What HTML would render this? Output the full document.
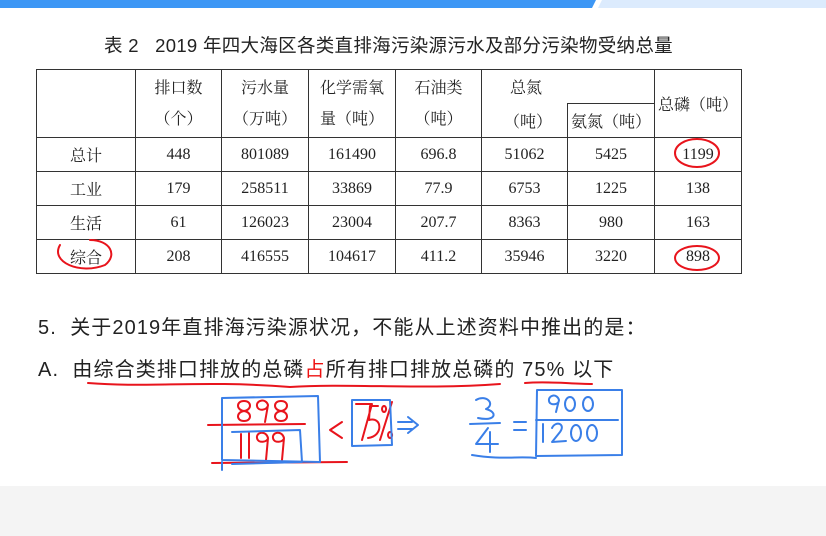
<!DOCTYPE html>
<html><head><meta charset="utf-8"><style>
*{margin:0;padding:0;box-sizing:border-box}
body{width:826px;height:536px;background:#fff;position:relative;overflow:hidden;font-family:"Liberation Serif","Noto Serif CJK SC",serif;color:#222}
.a{position:absolute;white-space:nowrap}
table{position:absolute;left:36px;top:69px;border-collapse:collapse;font-size:16px}
td{border:1.5px solid #333;text-align:center;height:34px;padding:0}
.s{font-family:"Liberation Sans","Noto Sans CJK SC",sans-serif}
</style></head><body>
<svg class="a" style="left:0;top:0" width="826" height="10">
<polygon points="0,0 596,0 592,8 0,8" fill="#3d97f5"/>
<polygon points="602,0 826,0 826,8 598,8" fill="#dcebfd"/>
</svg>
<div class="a" style="left:104px;top:32px;font-size:18.5px;letter-spacing:0.3px;font-family:'Liberation Sans','Noto Sans CJK SC',sans-serif;color:#222">表 2&nbsp;&nbsp; 2019 年四大海区各类直排海污染源污水及部分污染物受纳总量</div>
<table>
<colgroup><col style="width:99px"><col style="width:86px"><col style="width:87px"><col style="width:87px"><col style="width:86px"><col style="width:86px"><col style="width:87px"><col style="width:87px"></colgroup>
<tr style="height:34px"><td rowspan="2"></td><td rowspan="2" style="line-height:31px">排口数<br>（个）</td><td rowspan="2" style="line-height:31px">污水量<br>（万吨）</td><td rowspan="2" style="line-height:31px">化学需氧<br>量（吨）</td><td rowspan="2" style="line-height:31px">石油类<br>（吨）</td><td colspan="2" style="border-bottom:none;text-align:left;padding-left:28px">总氮</td><td rowspan="2">总磷（吨）</td></tr>
<tr style="height:34px"><td style="border-top:none;border-bottom:none;text-align:left;padding-left:22px">（吨）</td><td>氨氮（吨）</td></tr>
<tr><td>总计</td><td>448</td><td>801089</td><td>161490</td><td>696.8</td><td>51062</td><td>5425</td><td>1199</td></tr>
<tr><td>工业</td><td>179</td><td>258511</td><td>33869</td><td>77.9</td><td>6753</td><td>1225</td><td>138</td></tr>
<tr><td>生活</td><td>61</td><td>126023</td><td>23004</td><td>207.7</td><td>8363</td><td>980</td><td>163</td></tr>
<tr><td>综合</td><td>208</td><td>416555</td><td>104617</td><td>411.2</td><td>35946</td><td>3220</td><td>898</td></tr>
</table>
<div class="a s" style="left:38px;top:311px;font-size:20px;letter-spacing:1.1px;color:#222">5.&nbsp; 关于2019年直排海污染源状况，不能从上述资料中推出的是：</div>
<div class="a s" style="left:38px;top:353px;font-size:20px;letter-spacing:1.1px;color:#222">A.&nbsp; 由综合类排口排放的总磷<span style="color:#e11">占</span>所有排口排放总磷的 75% 以下</div>
<div style="position:absolute;left:0;top:486px;width:826px;height:50px;background:#f4f4f4"></div>
<svg class="a" style="left:0;top:0" width="826" height="536" fill="none" stroke-linecap="round" stroke-linejoin="round">
<g stroke="#e8141c" stroke-width="2">
<ellipse cx="697" cy="153" rx="22" ry="14"/>
<ellipse cx="697" cy="258" rx="22" ry="12"/>
<path d="M60,245 C50,262 80,275 105,265 C118,255 110,240 90,240"/>
<path d="M88,383 C150,388 200,380 290,387 C350,383 420,390 500,384"/>
<path d="M525,383 C550,381 570,384 592,384"/>
<path d="M208,425 L305,424"/>
<path d="M212,463 L347,462"/>
<path d="M244,401 C236,401 236,410 244,411 C252,412 252,421 244,421 C236,421 236,412 244,411 C252,410 252,401 244,401"/>
<path d="M268,405 C266,398 256,400 257,406 C258,412 268,410 268,405 L265,422"/>
<path d="M281,401 C273,401 273,410 281,411 C289,412 289,421 281,421 C273,421 273,412 281,411 C289,410 289,401 281,401"/>
<path d="M241,434 L241,458 M249,433 L249,458"/>
<path d="M268,438 C266,430 256,432 257,438 C258,444 268,442 268,438 L266,460"/>
<path d="M284,438 C282,430 272,432 273,438 C274,444 284,442 284,438 L282,460"/>
<path d="M342,422 L330,430 L342,438"/>
<path d="M356,404 L372,404 L362,440 M378,406 L370,406 L369,420 C382,416 384,436 368,438 M392,402 L380,440 M384,406 a2,3 0 1,0 0.1,0 M390,432 a2,3 0 1,0 0.1,0"/>
</g>
<g stroke="#3a7fe8" stroke-width="2">
<path d="M222,398 L318,396 L320,462 L222,460 Z"/>
<path d="M232,432 L300,430 L302,462 L232,464"/>
<path d="M352,400 L390,400 L392,445 L352,446 Z"/>
<path d="M398,422 L412,422 M398,429 L412,429 M408,417 L418,425 L408,433"/>
<path d="M476,400 C486,394 496,404 486,409 C498,412 496,422 478,418 M470,424 L500,423 M488,428 L476,444 L498,444 M490,432 L490,452"/>
<path d="M514,422 L526,422 M514,430 L526,430"/>
<path d="M537,390 L622,390 L622,455 L536,456 Z M536,420 L618,420"/>
<path d="M472,455 C500,460 520,456 536,458"/>
<path d="M559,400 C557,393 548,395 549,401 C550,406 559,405 559,400 L556,412"/>
<ellipse cx="570" cy="404" rx="5" ry="7"/><ellipse cx="588" cy="404" rx="5" ry="7"/>
<path d="M543,424 L543,442 M552,428 C556,420 566,424 560,432 L552,442 L566,441"/>
<ellipse cx="576" cy="433" rx="5" ry="8"/><ellipse cx="592" cy="433" rx="5" ry="8"/>
<path d="M222,462 L222,470"/>
</g>
</svg>
</body></html>
